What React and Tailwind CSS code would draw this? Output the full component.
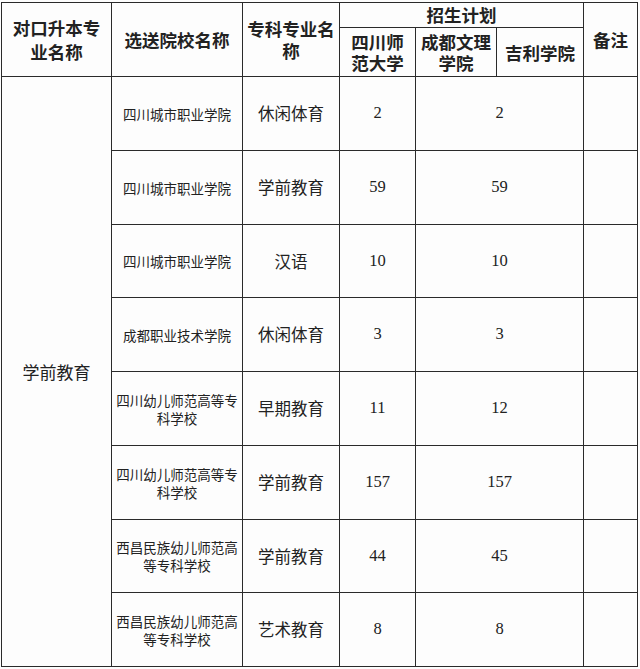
import React from "react";

const rows = [
  { school: "四川城市职业学院", major: "休闲体育", a: "2", b: "2" },
  { school: "四川城市职业学院", major: "学前教育", a: "59", b: "59" },
  { school: "四川城市职业学院", major: "汉语", a: "10", b: "10" },
  { school: "成都职业技术学院", major: "休闲体育", a: "3", b: "3" },
  { school: "四川幼儿师范高等专科学校", major: "早期教育", a: "11", b: "12" },
  { school: "四川幼儿师范高等专科学校", major: "学前教育", a: "157", b: "157" },
  { school: "西昌民族幼儿师范高等专科学校", major: "学前教育", a: "44", b: "45" },
  { school: "西昌民族幼儿师范高等专科学校", major: "艺术教育", a: "8", b: "8" },
];

const heights = ["h-[74px]", "h-[74px]", "h-[73px]", "h-[74px]", "h-[74px]", "h-[74px]", "h-[73px]", "h-[74px]"];

const cjk = "font-['Noto_Sans_CJK_SC',sans-serif]";
const cell = "border border-[#2a2a2a] text-center align-middle p-0";
const num = "text-[16.5px] font-['Liberation_Serif',serif]";

export default function App() {
  return (
    <div className={`bg-[#fdfdfd] w-[640px] h-[669px] pt-[2px] pl-[1px] text-[#222] ${cjk}`}>
      <table className="table-fixed border-collapse w-[637px]">
        <colgroup>
          <col className="w-[110px]" />
          <col className="w-[131px]" />
          <col className="w-[97px]" />
          <col className="w-[76px]" />
          <col className="w-[81px]" />
          <col className="w-[87px]" />
          <col className="w-[54px]" />
        </colgroup>
        <thead className="font-bold text-[17.5px] leading-[24px]">
          <tr className="h-[25px]">
            <th rowSpan={2} className={`${cell} px-[8px]`}>对口升本专业名称</th>
            <th rowSpan={2} className={cell}>选送院校名称</th>
            <th rowSpan={2} className={`${cell} px-[2px] leading-[22px]`}>专科专业名称</th>
            <th colSpan={3} className={`${cell} leading-[20px]`}>招生计划</th>
            <th rowSpan={2} className={cell}>备注</th>
          </tr>
          <tr className="h-[49px] leading-[21px]">
            <th className={`${cell} px-[10px]`}>四川师范大学</th>
            <th className={`${cell} px-[2px]`}>成都文理学院</th>
            <th className={cell}>吉利学院</th>
          </tr>
        </thead>
        <tbody>
          {rows.map((r, i) => (
            <tr key={i} className={heights[i]}>
              {i === 0 && (
                <td rowSpan={8} className={`${cell} text-[17px]`}>学前教育</td>
              )}
              <td className={`${cell} text-[13.5px] leading-[18px] px-[3px]`}>{r.school}</td>
              <td className={`${cell} text-[16.5px]`}>{r.major}</td>
              <td className={`${cell} ${num}`}>{r.a}</td>
              <td colSpan={2} className={`${cell} ${num}`}>{r.b}</td>
              <td className={cell}></td>
            </tr>
          ))}
        </tbody>
      </table>
    </div>
  );
}
